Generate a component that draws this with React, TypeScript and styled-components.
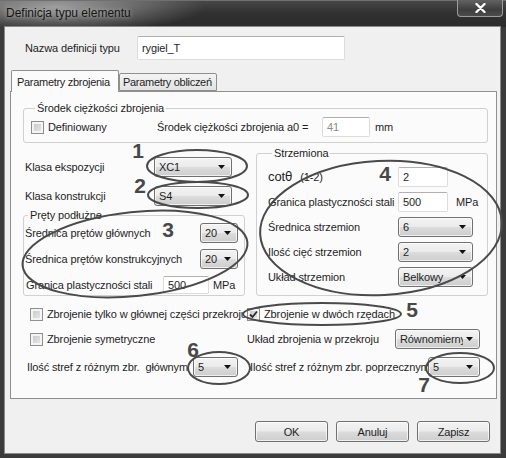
import React from "react";
import styled, { createGlobalStyle } from "styled-components";

const FONT = `"Liberation Sans", Arial, sans-serif`;

const GlobalStyle = createGlobalStyle`
  html, body { margin: 0; padding: 0; background: #ffffff; }
  #root { width: 506px; height: 458px; }
`;

const Window = styled.div`
  position: relative;
  width: 506px;
  height: 458px;
  display: flex;
  flex-direction: column;
  background: #3a3a3a;
  font-family: ${FONT};
  font-size: 11px;
  letter-spacing: -0.12px;
  color: #1e1e1e;
  overflow: hidden;
`;

const TitleBar = styled.div`
  height: 27px;
  flex: none;
  box-sizing: border-box;
  display: flex;
  align-items: flex-start;
  padding-left: 6px;
  border-top: 1px solid #707070;
  background:
    radial-gradient(ellipse 150px 26px at 55px 6px, rgba(190, 190, 190, 0.75), rgba(190, 190, 190, 0) 100%),
    linear-gradient(to bottom, #474747 0%, #313131 45%, #2b2b2b 100%);
`;

const Title = styled.span`
  font-size: 12px;
  letter-spacing: 0;
  line-height: 24px;
  color: #141414;
  text-shadow: 0 0 5px rgba(255, 255, 255, 0.6);
`;

const CloseButton = styled.div`
  margin-left: auto;
  margin-right: 3px;
  margin-top: -1px;
  width: 46px;
  height: 17px;
  box-sizing: border-box;
  border: 1px solid #9c9c9c;
  border-top: none;
  border-radius: 0 0 4px 4px;
  background: linear-gradient(#626262, #3e3e3e 60%, #4c4c4c);
  display: flex;
  align-items: center;
  justify-content: center;
`;

const Frame = styled.div`
  flex: 1;
  display: flex;
  padding: 0 6px 5px 5px;
  background: #3b3b3b;
`;

const Client = styled.div`
  flex: 1;
  display: flex;
  flex-direction: column;
  background: #f0f0f0;
  box-shadow: 0 0 0 1px #8a8a8a;
`;

const NameRow = styled.div`
  margin-top: 9px;
  padding-left: 20px;
  display: flex;
  align-items: center;
  height: 24px;
`;

const Label = styled.span<{ $w?: number; $pl?: number }>`
  flex: none;
  width: ${(p) => (p.$w ? `${p.$w}px` : "auto")};
  padding-left: ${(p) => p.$pl ?? 0}px;
  box-sizing: border-box;
  white-space: nowrap;
  line-height: 13px;
`;

const TextBox = styled.div<{ $w: number; $h?: number; $muted?: boolean }>`
  flex: none;
  width: ${(p) => p.$w}px;
  height: ${(p) => p.$h ?? 20}px;
  box-sizing: border-box;
  border: 1px solid #dcdcdc;
  border-top-color: #b0b0b0;
  border-radius: 2px;
  background: #ffffff;
  padding-left: 4px;
  display: flex;
  align-items: center;
  color: ${(p) => (p.$muted ? "#8a8a8a" : "#1e1e1e")};
`;

const TabStrip = styled.div`
  margin-top: 10px;
  padding-left: 6px;
  height: 21px;
  display: flex;
  align-items: flex-end;
  position: relative;
  z-index: 1;
`;

const Tab = styled.div<{ $active?: boolean; $w: number }>`
  width: ${(p) => p.$w}px;
  height: ${(p) => (p.$active ? 22 : 18)}px;
  margin-bottom: ${(p) => (p.$active ? -1 : 0)}px;
  box-sizing: border-box;
  border: 1px solid #8e8f8f;
  border-bottom: ${(p) => (p.$active ? "none" : "1px solid #8e8f8f")};
  border-radius: 2px 2px 0 0;
  background: ${(p) => (p.$active ? "#fbfbfb" : "linear-gradient(#f4f4f4, #e2e2e2)")};
  padding-left: ${(p) => (p.$active ? 5 : 3)}px;
  letter-spacing: -0.3px;
  display: flex;
  align-items: center;
  white-space: nowrap;
  overflow: hidden;
`;

const Panel = styled.div`
  margin-left: 5px;
  width: 487px;
  height: 308px;
  box-sizing: border-box;
  border: 1px solid #8e8f8f;
  background: #fbfbfb;
  display: flex;
  flex-direction: column;
  padding: 0 8px 0 12px;
`;

const Group = styled.fieldset<{ $mt?: number; $pad: string }>`
  margin: ${(p) => p.$mt ?? 0}px 0 0 0;
  padding: ${(p) => p.$pad};
  border: 1px solid #d0d0d0;
  border-radius: 3px;
  min-width: 0;
  display: flex;
  flex-direction: column;
`;

const Legend = styled.legend`
  padding: 0 2px;
  margin-left: 4px;
  line-height: 13px;
  font-size: 11px;
`;

const Row = styled.div<{ $mt?: number }>`
  display: flex;
  align-items: center;
  height: 20px;
  margin-top: ${(p) => p.$mt ?? 0}px;
  flex: none;
`;

const Stack = styled.div<{ $gap: number }>`
  display: flex;
  flex-direction: column;
  gap: ${(p) => p.$gap}px;
`;

const CheckItem = styled.div<{ $w?: number; $pl?: number }>`
  display: flex;
  align-items: center;
  gap: 4px;
  width: ${(p) => (p.$w ? `${p.$w}px` : "auto")};
  padding-left: ${(p) => p.$pl ?? 0}px;
  box-sizing: border-box;
  white-space: nowrap;
  overflow: hidden;
  flex: none;
`;

const CheckBox = styled.span`
  flex: none;
  width: 13px;
  height: 13px;
  box-sizing: border-box;
  border: 1px solid #8f8f8f;
  background: linear-gradient(135deg, #c4c4c4, #ececec);
  box-shadow: inset 0 0 0 2px #f4f4f4;
  display: flex;
  align-items: center;
  justify-content: center;
`;

const ComboBox = styled.div<{ $w: number }>`
  flex: none;
  width: ${(p) => p.$w}px;
  height: 20px;
  box-sizing: border-box;
  border: 1px solid #707070;
  border-radius: 3px;
  background: linear-gradient(#f3f3f3 0%, #ebebeb 48%, #dcdcdc 52%, #cdcdcd 100%);
  box-shadow: inset 0 0 0 1px rgba(255, 255, 255, 0.7);
  display: flex;
  align-items: center;
  padding: 0 6px 0 4px;
  gap: 3px;
`;

const ComboText = styled.span`
  flex: 1;
  overflow: hidden;
  white-space: nowrap;
`;

const Unit = styled.span<{ $ml: number }>`
  margin-left: ${(p) => p.$ml}px;
  white-space: nowrap;
`;

const Columns = styled.div`
  margin-top: 4px;
  display: grid;
  grid-template-columns: 222px 232px;
  column-gap: 11px;
  align-items: start;
`;

const Column = styled.div`
  display: flex;
  flex-direction: column;
`;

const Cot = styled.span`
  font-size: 13px;
`;

const Theta = styled.span`
  font-family: "DejaVu Sans", sans-serif;
  font-size: 12px;
`;

const BottomGrid = styled.div`
  margin-top: 11px;
  display: grid;
  grid-template-columns: 222px 1fr;
  grid-template-rows: 14px 20px 20px;
  column-gap: 2px;
  row-gap: 8px;
`;

const Cell = styled.div`
  display: flex;
  align-items: center;
  min-width: 0;
`;

const ButtonRow = styled.div`
  margin-top: 22px;
  padding-right: 10px;
  display: flex;
  justify-content: flex-end;
  gap: 8px;
`;

const Button = styled.div`
  width: 73px;
  height: 21px;
  box-sizing: border-box;
  border: 1px solid #707070;
  border-radius: 3px;
  background: linear-gradient(#f3f3f3 0%, #ebebeb 48%, #dcdcdc 52%, #cdcdcd 100%);
  box-shadow: inset 0 0 0 1px rgba(255, 255, 255, 0.7);
  display: flex;
  align-items: center;
  justify-content: center;
`;

const Annotations = styled.svg`
  position: absolute;
  left: 0;
  top: 0;
  width: 506px;
  height: 458px;
  pointer-events: none;
  ellipse {
    fill: none;
    stroke: #4a4a4a;
    stroke-width: 2;
  }
  text {
    font-family: ${FONT};
    font-weight: bold;
    font-size: 21px;
    fill: #484848;
    text-anchor: middle;
  }
`;

const Arrow = () => (
  <svg width="7" height="4" viewBox="0 0 7 4">
    <path d="M0 0H7L3.5 4Z" fill="#111" />
  </svg>
);

const Combo = ({ w, value }: { w: number; value: string }) => (
  <ComboBox $w={w}>
    <ComboText>{value}</ComboText>
    <Arrow />
  </ComboBox>
);

const Check = ({ checked }: { checked?: boolean }) => (
  <CheckBox>
    {checked && (
      <svg width="9" height="9" viewBox="0 0 9 9">
        <path d="M1 4.5L3.5 7L8 1.5" fill="none" stroke="#2a2a2a" strokeWidth="1.8" />
      </svg>
    )}
  </CheckBox>
);

export default function App() {
  return (
    <>
      <GlobalStyle />
      <Window>
        <TitleBar>
          <Title>Definicja typu elementu</Title>
          <CloseButton>
            <svg width="11" height="10" viewBox="0 0 11 10">
              <path d="M1.5 1L9.5 9M9.5 1L1.5 9" stroke="#ffffff" strokeWidth="2.4" strokeLinecap="round" />
            </svg>
          </CloseButton>
        </TitleBar>
        <Frame>
          <Client>
            <NameRow>
              <Label $w={112}>Nazwa definicji typu</Label>
              <TextBox $w={208} $h={24}>rygiel_T</TextBox>
            </NameRow>
            <TabStrip>
              <Tab $active $w={108}>Parametry zbrojenia</Tab>
              <Tab $w={98}>Parametry obliczeń</Tab>
            </TabStrip>
            <Panel>
              <Group $mt={10} $pad="2px 0 5px 7px">
                <Legend>Środek ciężkości zbrojenia</Legend>
                <Row>
                  <CheckItem $w={126}>
                    <Check />
                    <span>Definiowany</span>
                  </CheckItem>
                  <Label $w={165}>Środek ciężkości zbrojenia a0 =</Label>
                  <TextBox $w={48} $muted>41</TextBox>
                  <Unit $ml={5}>mm</Unit>
                </Row>
              </Group>

              <Columns>
                <Column>
                  <Row $mt={10}>
                    <Label $w={131} $pl={2}>Klasa ekspozycji</Label>
                    <Combo w={78} value="XC1" />
                  </Row>
                  <Row $mt={9}>
                    <Label $w={131} $pl={2}>Klasa konstrukcji</Label>
                    <Combo w={78} value="S4" />
                  </Row>
                  <Group $mt={3} $pad="1px 0 0 0">
                    <Legend>Pręty podłużne</Legend>
                    <Stack $gap={6}>
                      <Row>
                        <Label $w={176} $pl={1}>Średnica prętów głównych</Label>
                        <Combo w={38} value="20" />
                      </Row>
                      <Row>
                        <Label $w={176} $pl={1}>Średnica prętów konstrukcyjnych</Label>
                        <Combo w={38} value="20" />
                      </Row>
                      <Row>
                        <Label $w={139} $pl={2}>Granica plastyczności stali</Label>
                        <TextBox $w={46} $h={18}>500</TextBox>
                        <Unit $ml={4}>MPa</Unit>
                      </Row>
                    </Stack>
                  </Group>
                </Column>

                <Group $pad="7px 0 8px 11px">
                  <Legend>Strzemiona</Legend>
                  <Stack $gap={5}>
                    <Row>
                      <Label $w={130}>
                        <Cot>cot</Cot>
                        <Theta>θ</Theta>
                        <Unit $ml={8}>(1-2)</Unit>
                      </Label>
                      <TextBox $w={50}>2</TextBox>
                    </Row>
                    <Row>
                      <Label $w={130}>Granica plastyczności stali</Label>
                      <TextBox $w={50}>500</TextBox>
                      <Unit $ml={8}>MPa</Unit>
                    </Row>
                    <Row>
                      <Label $w={130}>Średnica strzemion</Label>
                      <Combo w={75} value="6" />
                    </Row>
                    <Row>
                      <Label $w={130}>Ilość cięć strzemion</Label>
                      <Combo w={75} value="2" />
                    </Row>
                    <Row>
                      <Label $w={130}>Układ strzemion</Label>
                      <Combo w={75} value="Belkowy" />
                    </Row>
                  </Stack>
                </Group>
              </Columns>

              <BottomGrid>
                <Cell>
                  <CheckItem $w={222} $pl={7}>
                    <Check />
                    <span>Zbrojenie tylko w głównej części przekroju</span>
                  </CheckItem>
                </Cell>
                <Cell>
                  <CheckItem>
                    <Check checked />
                    <span>Zbrojenie w dwóch rzędach</span>
                  </CheckItem>
                </Cell>
                <Cell>
                  <CheckItem $pl={7}>
                    <Check />
                    <span>Zbrojenie symetryczne</span>
                  </CheckItem>
                </Cell>
                <Cell>
                  <Label $w={148}>Układ zbrojenia w przekroju</Label>
                  <Combo w={85} value="Równomierny" />
                </Cell>
                <Cell>
                  <Label $w={170} $pl={4}>Ilość stref z różnym zbr.&nbsp; głównym</Label>
                  <Combo w={45} value="5" />
                </Cell>
                <Cell>
                  <Label $w={181} $pl={3}>Ilość stref z różnym zbr. poprzecznym</Label>
                  <Combo w={52} value="5" />
                </Cell>
              </BottomGrid>
            </Panel>
            <ButtonRow>
              <Button>OK</Button>
              <Button>Anuluj</Button>
              <Button>Zapisz</Button>
            </ButtonRow>
          </Client>
        </Frame>

        <Annotations viewBox="0 0 506 458">
          <ellipse cx="197" cy="166" rx="50" ry="16" />
          <ellipse cx="198" cy="195" rx="50" ry="13" />
          <ellipse cx="135" cy="254" rx="113" ry="42" transform="rotate(-6 135 254)" />
          <ellipse cx="381" cy="228" rx="121" ry="67" transform="rotate(-3 381 228)" />
          <ellipse cx="322" cy="314" rx="79" ry="11" />
          <ellipse cx="219" cy="368" rx="31" ry="16" />
          <ellipse cx="460" cy="368" rx="34" ry="15" />
          <text x="138" y="158">1</text>
          <text x="140" y="193">2</text>
          <text x="168" y="237">3</text>
          <text x="385" y="181">4</text>
          <text x="412" y="317">5</text>
          <text x="193" y="357">6</text>
          <text x="424" y="392">7</text>
        </Annotations>
      </Window>
    </>
  );
}
